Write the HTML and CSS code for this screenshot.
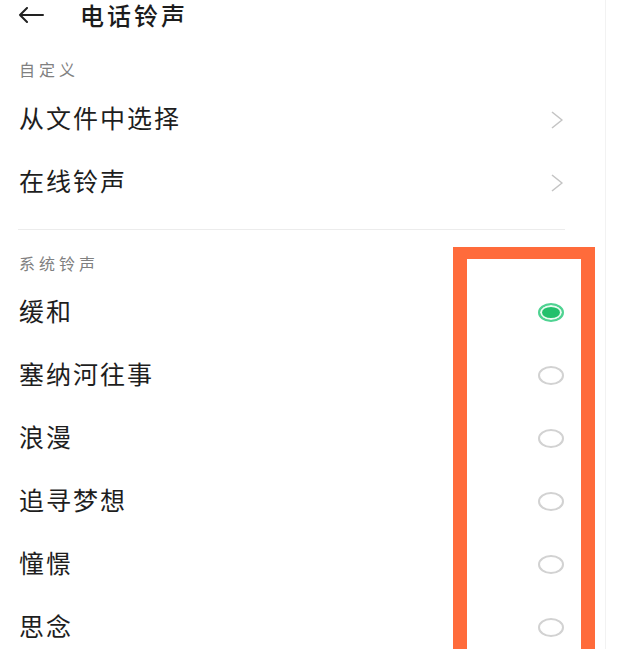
FILE: index.html
```html
<!DOCTYPE html>
<html lang="zh-CN">
<head>
  <meta charset="UTF-8" />
  <meta name="viewport" content="width=device-width, initial-scale=1.0" />
  <title>电话铃声</title>
  <link rel="stylesheet" href="styles.css">
</head>
<body>
  <div class="page">
    <div class="header">
      <svg class="back" width="26" height="16" viewBox="0 0 26 16">
        <path d="M25 8H2M9 1L2 8l7 7" fill="none" stroke="#222" stroke-width="2" stroke-linecap="round" stroke-linejoin="round"/>
      </svg>
      <span class="title">电话铃声</span>
    </div>

    <div class="section-label first">自定义</div>
    <div class="row">
      <span class="row-text">从文件中选择</span>
      <svg class="chevron" width="14" height="20" viewBox="0 0 14 20">
        <path d="M2 2l10 8-10 8" fill="none" stroke="#c4c4c4" stroke-width="1.6" stroke-linejoin="round"/>
      </svg>
    </div>
    <div class="row">
      <span class="row-text">在线铃声</span>
      <svg class="chevron" width="14" height="20" viewBox="0 0 14 20">
        <path d="M2 2l10 8-10 8" fill="none" stroke="#c4c4c4" stroke-width="1.6" stroke-linejoin="round"/>
      </svg>
    </div>

    <div class="divider"></div>

    <div class="section-label">系统铃声</div>
    <div class="row">
      <span class="row-text">缓和</span>
      <span class="radio checked"></span>
    </div>
    <div class="row">
      <span class="row-text">塞纳河往事</span>
      <span class="radio"></span>
    </div>
    <div class="row">
      <span class="row-text">浪漫</span>
      <span class="radio"></span>
    </div>
    <div class="row">
      <span class="row-text">追寻梦想</span>
      <span class="radio"></span>
    </div>
    <div class="row">
      <span class="row-text">憧憬</span>
      <span class="radio"></span>
    </div>
    <div class="row">
      <span class="row-text">思念</span>
      <span class="radio"></span>
    </div>

    <!-- 标注框 -->
    <div class="highlight"></div>
  </div>
</body>
</html>
```

FILE: styles.css
```css
body {
  margin: 0;
  padding: 0;
  background: #fff;
  font-family: "Noto Sans CJK SC", "Noto Sans", sans-serif;
  overflow: hidden;
}

.page {
  position: relative;
  width: 605px;
  height: 649px;
  border-right: 1px solid #f2f2f2;
  overflow: hidden;
}

.header {
  display: flex;
  align-items: center;
  height: 30px;
  padding-left: 18px;
}

.title {
  margin-left: 36px;
  font-size: 24px;
  line-height: 30px;
  font-weight: 500;
  letter-spacing: 3px;
  color: #1c1c1c;
}

.section-label {
  padding-left: 19px;
  margin-top: 23px;
  font-size: 16px;
  line-height: 20px;
  letter-spacing: 4px;
  color: #808080;
}

.section-label.first {
  margin-top: 29px;
  margin-bottom: 9px;
}

.row {
  display: flex;
  align-items: center;
  justify-content: space-between;
  height: 63px;
  padding: 0 41px 0 19px;
}

.row-text {
  padding-bottom: 6px;
  font-size: 25px;
  line-height: 30px;
  letter-spacing: 2px;
  color: #1e1e1e;
}

.divider {
  height: 1px;
  margin: 15px 40px 0 18px;
  background: #ececec;
}

.section-label + .row {
  margin-top: 8px;
}

.radio {
  width: 26px;
  height: 19px;
  box-sizing: border-box;
  border: 2px solid #d2d2d2;
  border-radius: 50%;
}

.radio.checked {
  border-color: #4fd392;
  background: #22c06c;
  box-shadow: inset 0 0 0 2px #e9fbf1;
}

.highlight {
  position: absolute;
  left: 453px;
  top: 247px;
  width: 142px;
  height: 430px;
  box-sizing: border-box;
  border: 14px solid #ff6b3b;
  border-top-width: 12px;
  border-bottom: none;
}
```
